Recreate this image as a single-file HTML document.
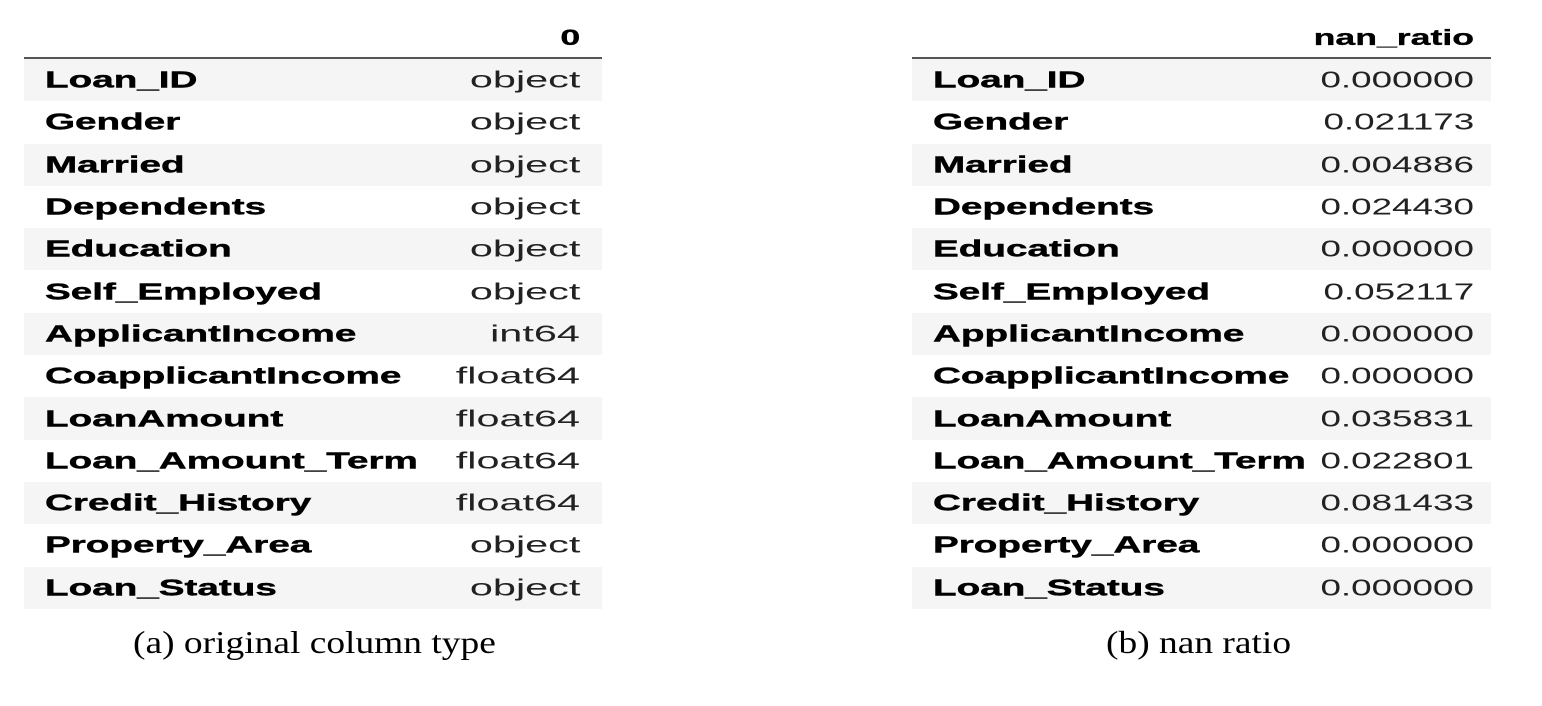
<!DOCTYPE html>
<html><head><meta charset="utf-8"><style>
body{margin:0;width:1542px;height:706px;background:#fff;position:relative;overflow:hidden;font-family:"Liberation Sans",Arial,sans-serif;color:#000}
.hl{position:absolute;top:57px;height:2px;background:#555}
.tb{position:absolute;top:59px}
.row{position:relative;height:42.3px}
.row.g{background:#f5f5f5}
.k,.v{position:absolute;top:50%;white-space:nowrap;line-height:1}
.k{left:21px;font-weight:bold;font-size:23px;-webkit-text-stroke:0.4px #000;transform:translateY(-50%) scaleX(1.68);transform-origin:left center}
.v{right:22px;font-size:23px;color:#222;transform:translateY(-50%) scaleX(1.8);transform-origin:right center}
.R .v{right:17px;transform:translateY(-50%) scaleX(1.6)}
.h{position:absolute;top:27px;font-weight:bold;font-size:22px;-webkit-text-stroke:0.3px #000;line-height:1;white-space:nowrap;transform:scaleX(1.62);transform-origin:right top}
.cap{position:absolute;top:624px;font-family:"Liberation Serif",serif;font-size:32px;white-space:nowrap;transform:scaleX(1.17);transform-origin:left top}
</style></head><body>
<div class="h" style="right:962px">0</div>
<div class="h" style="right:68px">nan_ratio</div>
<div class="hl" style="left:24px;width:578px"></div>
<div class="hl" style="left:912px;width:579px"></div>
<div class="tb" style="left:24px;width:578px">
<div class="row g"><span class="k">Loan_ID</span><span class="v">object</span></div>
<div class="row"><span class="k">Gender</span><span class="v">object</span></div>
<div class="row g"><span class="k">Married</span><span class="v">object</span></div>
<div class="row"><span class="k">Dependents</span><span class="v">object</span></div>
<div class="row g"><span class="k">Education</span><span class="v">object</span></div>
<div class="row"><span class="k">Self_Employed</span><span class="v">object</span></div>
<div class="row g"><span class="k">ApplicantIncome</span><span class="v">int64</span></div>
<div class="row"><span class="k">CoapplicantIncome</span><span class="v">float64</span></div>
<div class="row g"><span class="k">LoanAmount</span><span class="v">float64</span></div>
<div class="row"><span class="k">Loan_Amount_Term</span><span class="v">float64</span></div>
<div class="row g"><span class="k">Credit_History</span><span class="v">float64</span></div>
<div class="row"><span class="k">Property_Area</span><span class="v">object</span></div>
<div class="row g"><span class="k">Loan_Status</span><span class="v">object</span></div>
</div>
<div class="tb R" style="left:912px;width:579px">
<div class="row g"><span class="k">Loan_ID</span><span class="v">0.000000</span></div>
<div class="row"><span class="k">Gender</span><span class="v">0.021173</span></div>
<div class="row g"><span class="k">Married</span><span class="v">0.004886</span></div>
<div class="row"><span class="k">Dependents</span><span class="v">0.024430</span></div>
<div class="row g"><span class="k">Education</span><span class="v">0.000000</span></div>
<div class="row"><span class="k">Self_Employed</span><span class="v">0.052117</span></div>
<div class="row g"><span class="k">ApplicantIncome</span><span class="v">0.000000</span></div>
<div class="row"><span class="k">CoapplicantIncome</span><span class="v">0.000000</span></div>
<div class="row g"><span class="k">LoanAmount</span><span class="v">0.035831</span></div>
<div class="row"><span class="k">Loan_Amount_Term</span><span class="v">0.022801</span></div>
<div class="row g"><span class="k">Credit_History</span><span class="v">0.081433</span></div>
<div class="row"><span class="k">Property_Area</span><span class="v">0.000000</span></div>
<div class="row g"><span class="k">Loan_Status</span><span class="v">0.000000</span></div>
</div>
<div class="cap" style="left:133px">(a) original column type</div>
<div class="cap" style="left:1106px">(b) nan ratio</div>
</body></html>
